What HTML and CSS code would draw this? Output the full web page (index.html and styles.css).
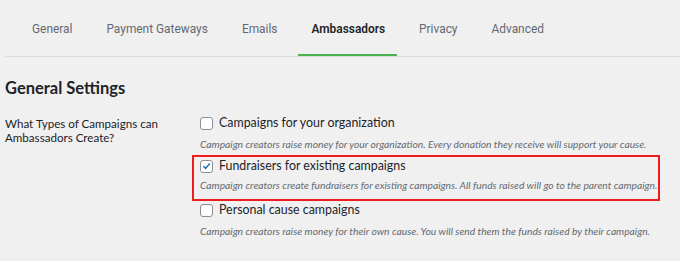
FILE: index.html
```html
<!DOCTYPE html>
<html>
<head>
<meta charset="utf-8">
<link rel="stylesheet" href="styles.css">
</head>
<body>
<div class="page">
  <nav class="tabs">
    <a class="tab">General</a>
    <a class="tab">Payment Gateways</a>
    <a class="tab">Emails</a>
    <a class="tab active">Ambassadors</a>
    <a class="tab">Privacy</a>
    <a class="tab">Advanced</a>
  </nav>
  <h2 class="heading">General Settings</h2>
  <div class="row">
    <div class="label">What Types of Campaigns can Ambassadors Create?</div>
    <div class="options">
      <div class="option">
        <label class="check"><span class="box"></span>Campaigns for your organization</label>
        <p class="desc">Campaign creators raise money for your organization. Every donation they receive will support your cause.</p>
      </div>
      <div class="option highlight">
        <label class="check"><span class="box checked"><svg viewBox="0 0 12 12" width="12" height="12"><path d="M2.6 6.2 L5 8.6 L9.6 3.2" fill="none" stroke="#2271b1" stroke-width="1.7"/></svg></span>Fundraisers for existing campaigns</label>
        <p class="desc">Campaign creators create fundraisers for existing campaigns. All funds raised will go to the parent campaign.</p>
      </div>
      <div class="option last">
        <label class="check"><span class="box"></span>Personal cause campaigns</label>
        <p class="desc">Campaign creators raise money for their own cause. You will send them the funds raised by their campaign.</p>
      </div>
    </div>
  </div>
</div>
</body>
</html>
```
FILE: styles.css
```css
html, body {
  margin: 0;
  padding: 0;
  background: #f0f0f1;
}
.page {
  width: 680px;
  height: 261px;
  overflow: hidden;
  font-family: Lato, "Noto Sans", sans-serif;
  color: #1d2327;
}
.tabs {
  display: flex;
  margin-left: 5px;
  padding-left: 27px;
  height: 56px;
  border-bottom: 1px solid #dcdcde;
  font-family: Roboto, "Noto Sans", sans-serif;
}
.tab {
  font-size: 11.9px;
  color: #646970;
  line-height: 58px;
  height: 56px;
  box-sizing: border-box;
  margin-right: 34px;
  white-space: nowrap;
}
.tab.active {
  color: #1d2327;
  font-weight: 600;
  border-bottom: 2px solid #4caf50;
  margin-left: -13px;
  padding: 0 12px 0 13px;
  margin-right: 22px;
}
.heading {
  margin: 21px 0 0 5px;
  font-family: Lato, "Liberation Sans", sans-serif;
  font-size: 16.5px;
  font-weight: 700;
  line-height: 20px;
  color: #1d2327;
}
.row {
  display: flex;
  margin-top: 18px;
}
.label {
  flex: none;
  width: 180px;
  margin-left: 5px;
  padding-right: 10px;
  font-size: 11.6px;
  line-height: 14px;
  color: #1d2327;
  margin-top: 1px;
}
.options {
  display: flex;
  flex-direction: column;
}
.option {
  margin-left: 5px;
}
.option.highlight {
  border: 2px solid #ee1c1c;
  margin-left: -3px;
  padding: 2px 0 0 6px;
  width: 458px;
  height: 40px;
  margin-top: 4px;
}
.option.highlight .desc {
  margin-top: 5px;
}
.check {
  display: flex;
  align-items: center;
  font-size: 12.4px;
  line-height: 14px;
  color: #1d2327;
  height: 14px;
}
.box {
  width: 11px;
  height: 11px;
  border: 1px solid #8c8f94;
  border-radius: 3px;
  background: #fff;
  margin-right: 6px;
  display: inline-flex;
  align-items: center;
  justify-content: center;
  flex: none;
}
.box svg {
  display: block;
}
.desc {
  margin: 7px 0 0 0;
  font-size: 10.25px;
  font-style: italic;
  line-height: 14px;
  color: #646970;
  white-space: nowrap;
}
.option.last {
  margin-top: 2px;
}
```
